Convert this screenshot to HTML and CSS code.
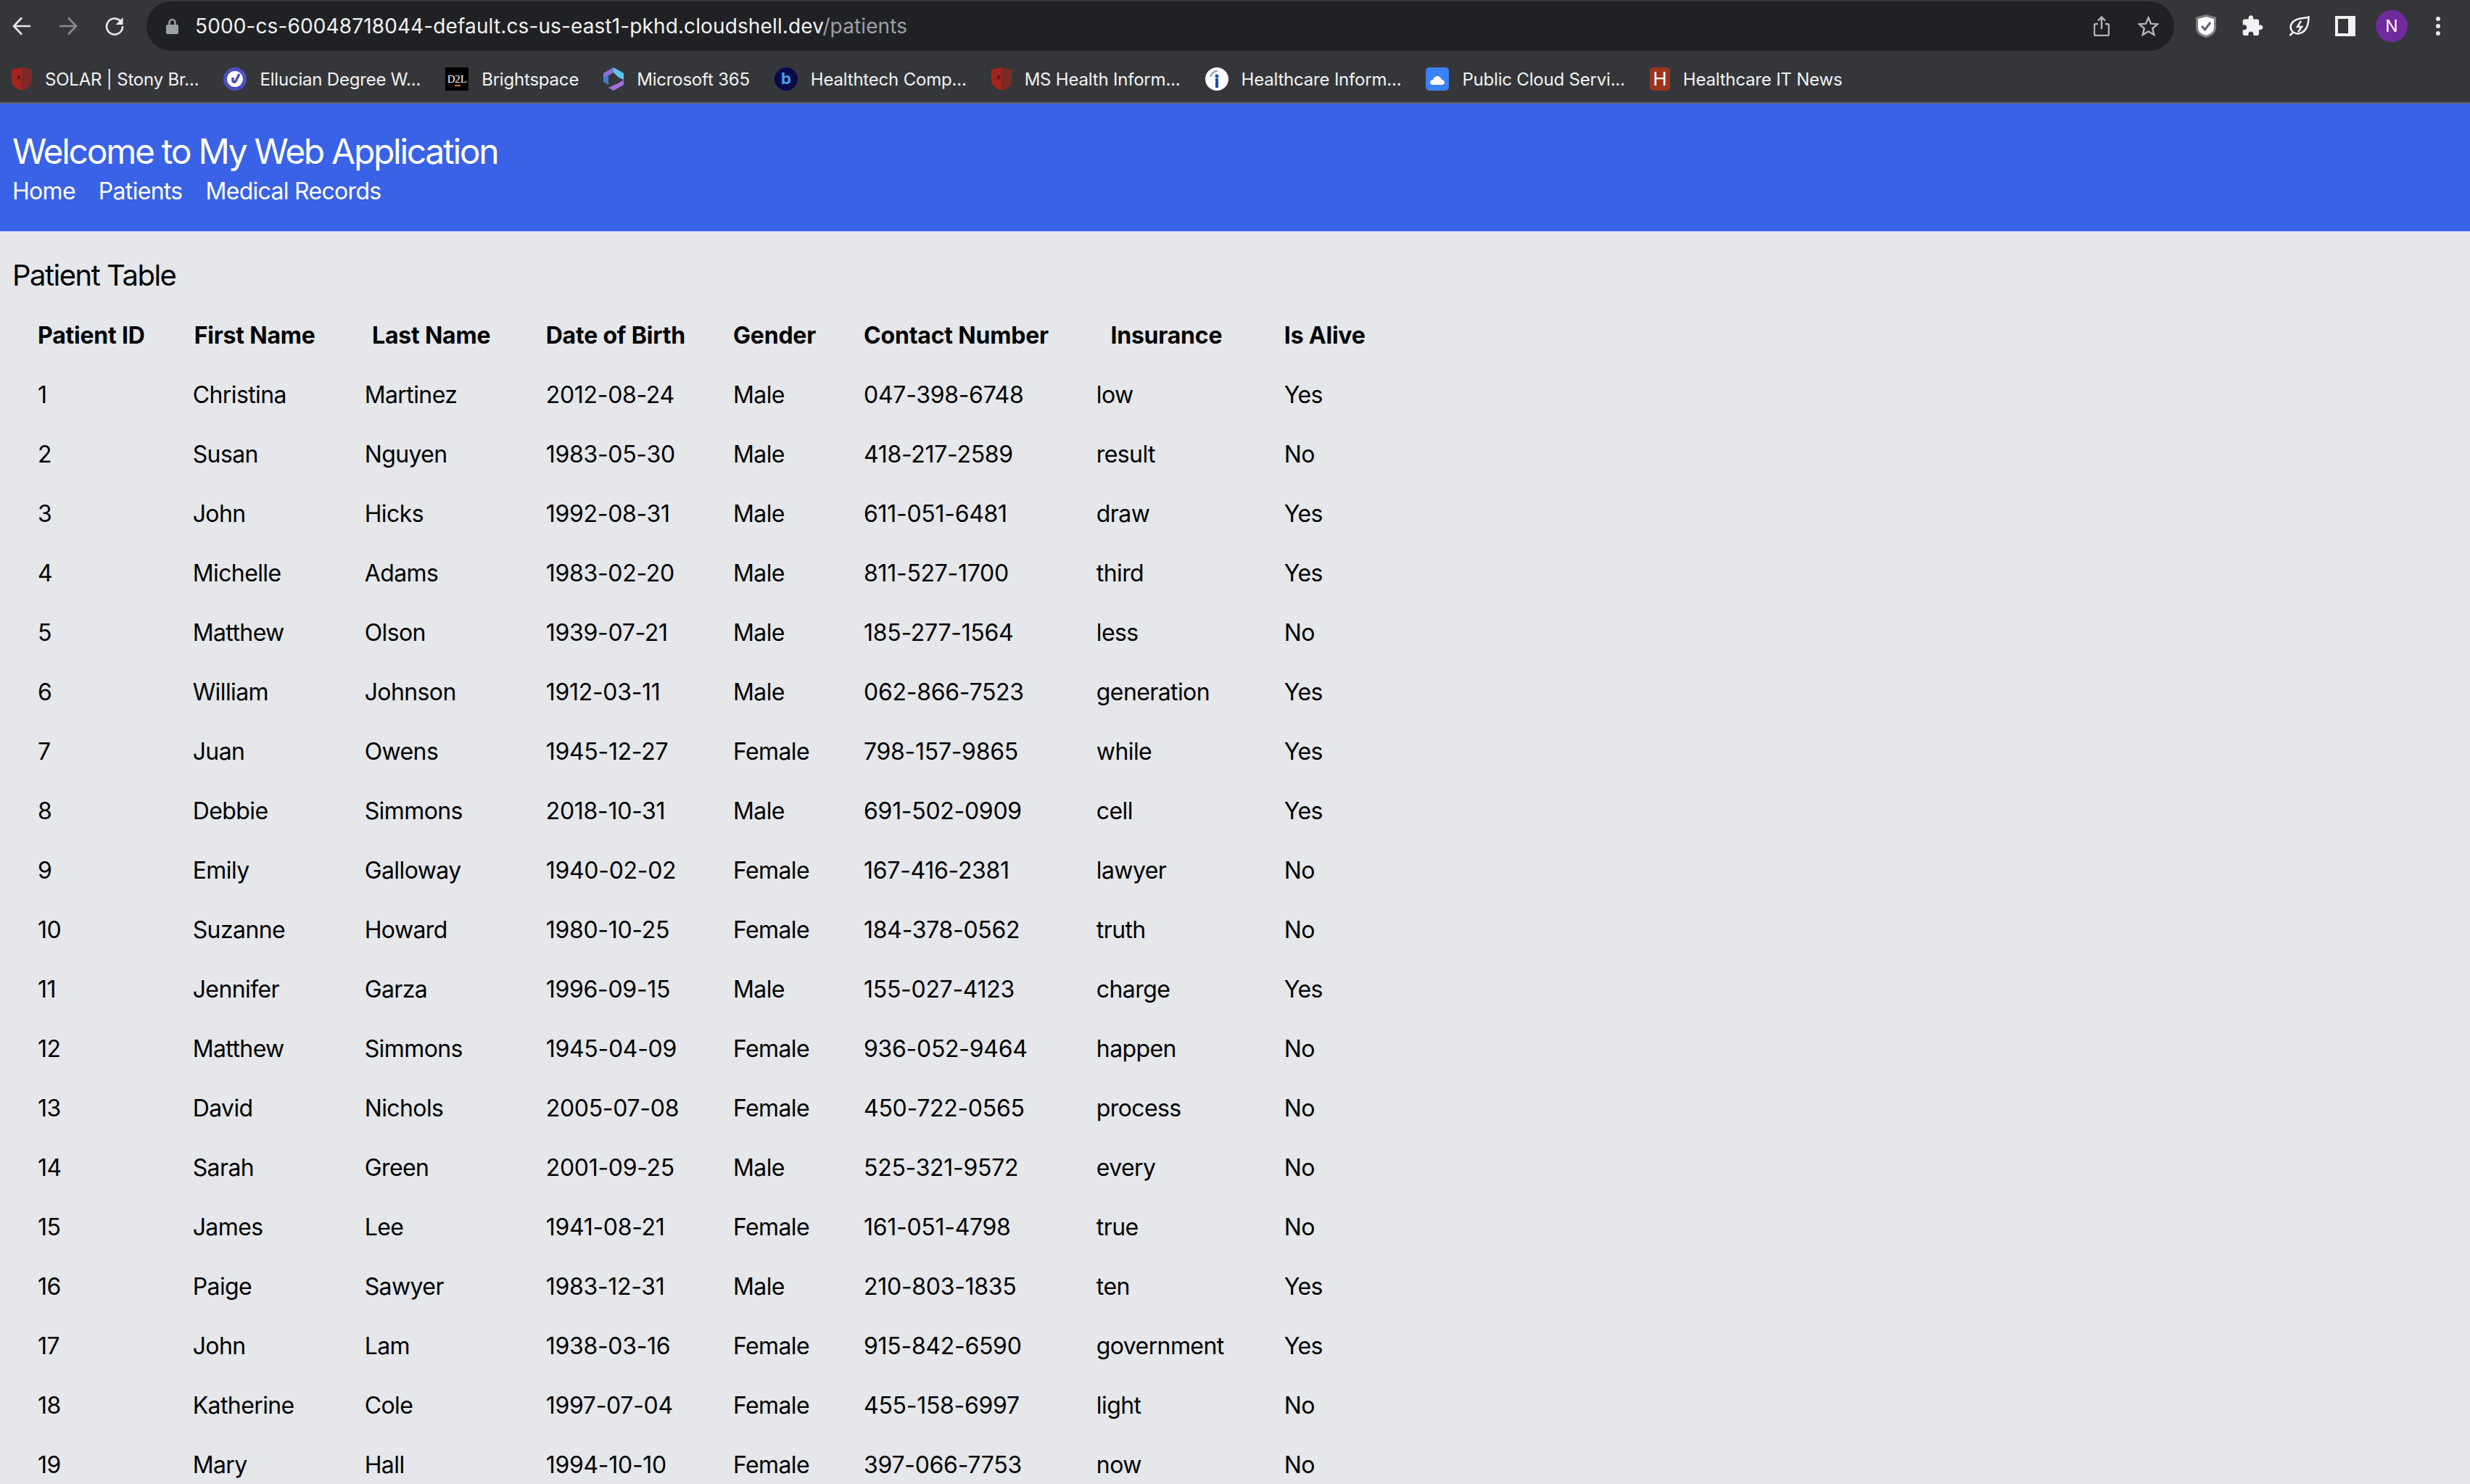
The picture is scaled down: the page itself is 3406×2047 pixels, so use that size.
FILE: index.html
```html
<!DOCTYPE html>
<html lang="en">
<head>
    <meta charset="UTF-8">
    <title>Patients</title>
    <link rel="stylesheet" href="styles.css">
</head>
<body>
    <div class="browser">
        <div class="toolbar">
            <svg class="nav-icon" viewBox="0 0 26 26"><path class="line" d="M25 13H2M13 1.500 2 13l11 11.500"/></svg>
            <svg class="nav-icon nav-off" viewBox="0 0 26 26"><path class="line" d="M1 13h23M13 1.500 24 13 13 24.500"/></svg>
            <svg class="nav-icon" viewBox="0 0 26 26"><path class="line" d="M22.500 8A11 11 0 1 0 24 13"/><path class="solid" d="M24.500 1v10h-10z"/></svg>
            <div class="address">
                <svg class="lock" viewBox="0 0 17 22"><path class="lock-loop" d="M4.500 10V6a4 4 0 0 1 8 0v4"/><rect class="solid" y="9" width="17" height="13" rx="2"/></svg>
                <span class="url">5000-cs-60048718044-default.cs-us-east1-pkhd.cloudshell.dev<span class="url-path">/patients</span></span>
                <svg class="addr-icon addr-share" viewBox="0 0 22 28"><path class="line-thin" d="M6 11H3a2 2 0 0 0-2 2v12a2 2 0 0 0 2 2h16a2 2 0 0 0 2-2V13a2 2 0 0 0-2-2h-3M11 18V2M6 6.500 11 1.500l5 5"/></svg>
                <svg class="addr-icon addr-star" viewBox="0 0 29 28"><path class="line-thin" d="m14.500 2.500 3.500 8.200 9 .7-6.800 5.900 2.100 8.700-7.800-4.700-7.800 4.700 2.100-8.700L2 11.400l9-.7z"/></svg>
            </div>
            <div class="extensions">
                <svg class="ext-shield" viewBox="0 0 28 32"><path class="shield-body" d="M14 1.500 26.500 5v13c0 6-5 10.500-12.500 12.500C6.500 28.500 1.500 24 1.500 18V5z"/><path class="shield-check" d="m8 16 4.500 5L20 11"/></svg>
                <svg class="ext-puzzle" viewBox="1.500 1 22 21.500"><path class="solid" d="M20.500 11H19V7c0-1.100-.9-2-2-2h-4V3.500C13 2.120 11.880 1 10.500 1S8 2.120 8 3.500V5H4c-1.100 0-1.990.9-1.990 2v3.800H3.500c1.490 0 2.700 1.210 2.700 2.700s-1.210 2.700-2.700 2.700H2V20c0 1.100.9 2 2 2h3.800v-1.500c0-1.490 1.210-2.700 2.700-2.700 1.490 0 2.700 1.210 2.700 2.700V22H17c1.100 0 2-.9 2-2v-4h1.500c1.380 0 2.500-1.120 2.500-2.500S21.880 11 20.500 11z"/></svg>
                <svg class="ext-leaf" viewBox="0 0 29 28"><path class="line-leaf" d="M1.500 27l5-5M27.500 1.500C24 3.500 12 2 6 8 1 13 2 19 6.500 22.500c4.500 3 10.500 2.500 15-2 5-5 6-11 6-19z"/><path class="line-bolt" d="M17 7l-5 8h6l-5 7"/></svg>
                <div class="ext-panel"><div class="ext-panel-hole"></div></div>
                <div class="avatar">N</div>
                <div class="dots"><i></i><i></i><i></i></div>
            </div>
        </div>

        <div class="bookmarks">
            <div class="bookmark">
                <svg class="fav fav-narrow" viewBox="0 0 28 32"><path fill="#a3241c" d="M0 3 14 0l14 3v15c0 7-6 11-14 14C6 29 0 25 0 18z"/><path fill="#7c2a26" d="M14 0l14 3v15c0 7-6 11-14 14z"/><rect fill="#5d1a16" x="8" y="11" width="4" height="5"/></svg>
                <span>SOLAR | Stony Br...</span>
            </div>
            <div class="bookmark">
                <svg class="fav" viewBox="0 0 32 32"><circle cx="16" cy="16" r="16" fill="#4a50c0"/><circle cx="16" cy="16" r="11" fill="#fff"/><path d="M22 9l-5 10c-1 2-4 1-4-1v-4" fill="none" stroke="#4a50c0" stroke-width="3.500"/></svg>
                <span>Ellucian Degree W...</span>
            </div>
            <div class="bookmark">
                <div class="fav fav-d2l">D<b>2</b>L</div>
                <span>Brightspace</span>
            </div>
            <div class="bookmark">
                <svg class="fav fav-narrow" viewBox="0 0 28 32"><path fill="#8a6fd6" d="M14 0 0 8v12l7 4V11l7-4z"/><path fill="#5cc3ee" d="M14 0l14 8v9l-8-4-6-6z"/><path fill="#a66fd8" d="M28 17v7l-14 8-7-4 13-6z"/><path fill="#3a7fd0" d="M0 14l7-3v13l-7-4z"/></svg>
                <span>Microsoft 365</span>
            </div>
            <div class="bookmark">
                <div class="fav fav-b">b</div>
                <span>Healthtech Comp...</span>
            </div>
            <div class="bookmark">
                <svg class="fav fav-narrow" viewBox="0 0 28 32"><path fill="#a3241c" d="M0 3 14 0l14 3v15c0 7-6 11-14 14C6 29 0 25 0 18z"/><path fill="#7c2a26" d="M14 0l14 3v15c0 7-6 11-14 14z"/><rect fill="#5d1a16" x="8" y="11" width="4" height="5"/></svg>
                <span>MS Health Inform...</span>
            </div>
            <div class="bookmark">
                <svg class="fav" viewBox="0 0 32 32"><circle cx="16" cy="16" r="16" fill="#fff"/><circle cx="16" cy="12" r="2.500" fill="#1d4f9e"/><rect x="14" y="15" width="4" height="13" fill="#1d4f9e"/><path d="M7 13a10 10 0 0 1 10-8" fill="none" stroke="#7a9cc9" stroke-width="2"/></svg>
                <span>Healthcare Inform...</span>
            </div>
            <div class="bookmark">
                <svg class="fav" viewBox="0 0 32 32"><rect width="32" height="32" rx="5" fill="#3b82f6"/><path fill="#fff" d="M6 21c0-3 2-4 4-4 1-3 3-5 6-5s5 2 6 5c2 0 4 1 4 4 0 2-2 3-4 3H10c-2 0-4-1-4-3z"/></svg>
                <span>Public Cloud Servi...</span>
            </div>
            <div class="bookmark">
                <div class="fav fav-narrow fav-h">H</div>
                <span>Healthcare IT News</span>
            </div>
        </div>
    </div>

    <header class="site-header">
        <h1>Welcome to My Web Application</h1>
        <nav class="site-nav">
            <a href="#">Home</a>
            <a href="#">Patients</a>
            <a href="#">Medical Records</a>
        </nav>
    </header>

    <main class="content">
        <h2>Patient Table</h2>
        <table class="patients">
            <thead>
                <tr>
                    <th>Patient ID</th>
                    <th class="col-first">First Name</th>
                    <th class="col-last">Last Name</th>
                    <th>Date of Birth</th>
                    <th>Gender</th>
                    <th>Contact Number</th>
                    <th class="col-insurance">Insurance</th>
                    <th>Is Alive</th>
                </tr>
            </thead>
            <tbody>
                <tr><td>1</td><td>Christina</td><td>Martinez</td><td class="num">2012-08-24</td><td>Male</td><td class="num">047-398-6748</td><td>low</td><td>Yes</td></tr>
                <tr><td>2</td><td>Susan</td><td>Nguyen</td><td class="num">1983-05-30</td><td>Male</td><td class="num">418-217-2589</td><td>result</td><td>No</td></tr>
                <tr><td>3</td><td>John</td><td>Hicks</td><td class="num">1992-08-31</td><td>Male</td><td class="num">611-051-6481</td><td>draw</td><td>Yes</td></tr>
                <tr><td>4</td><td>Michelle</td><td>Adams</td><td class="num">1983-02-20</td><td>Male</td><td class="num">811-527-1700</td><td>third</td><td>Yes</td></tr>
                <tr><td>5</td><td>Matthew</td><td>Olson</td><td class="num">1939-07-21</td><td>Male</td><td class="num">185-277-1564</td><td>less</td><td>No</td></tr>
                <tr><td>6</td><td>William</td><td>Johnson</td><td class="num">1912-03-11</td><td>Male</td><td class="num">062-866-7523</td><td>generation</td><td>Yes</td></tr>
                <tr><td>7</td><td>Juan</td><td>Owens</td><td class="num">1945-12-27</td><td>Female</td><td class="num">798-157-9865</td><td>while</td><td>Yes</td></tr>
                <tr><td>8</td><td>Debbie</td><td>Simmons</td><td class="num">2018-10-31</td><td>Male</td><td class="num">691-502-0909</td><td>cell</td><td>Yes</td></tr>
                <tr><td>9</td><td>Emily</td><td>Galloway</td><td class="num">1940-02-02</td><td>Female</td><td class="num">167-416-2381</td><td>lawyer</td><td>No</td></tr>
                <tr><td>10</td><td>Suzanne</td><td>Howard</td><td class="num">1980-10-25</td><td>Female</td><td class="num">184-378-0562</td><td>truth</td><td>No</td></tr>
                <tr><td>11</td><td>Jennifer</td><td>Garza</td><td class="num">1996-09-15</td><td>Male</td><td class="num">155-027-4123</td><td>charge</td><td>Yes</td></tr>
                <tr><td>12</td><td>Matthew</td><td>Simmons</td><td class="num">1945-04-09</td><td>Female</td><td class="num">936-052-9464</td><td>happen</td><td>No</td></tr>
                <tr><td>13</td><td>David</td><td>Nichols</td><td class="num">2005-07-08</td><td>Female</td><td class="num">450-722-0565</td><td>process</td><td>No</td></tr>
                <tr><td>14</td><td>Sarah</td><td>Green</td><td class="num">2001-09-25</td><td>Male</td><td class="num">525-321-9572</td><td>every</td><td>No</td></tr>
                <tr><td>15</td><td>James</td><td>Lee</td><td class="num">1941-08-21</td><td>Female</td><td class="num">161-051-4798</td><td>true</td><td>No</td></tr>
                <tr><td>16</td><td>Paige</td><td>Sawyer</td><td class="num">1983-12-31</td><td>Male</td><td class="num">210-803-1835</td><td>ten</td><td>Yes</td></tr>
                <tr><td>17</td><td>John</td><td>Lam</td><td class="num">1938-03-16</td><td>Female</td><td class="num">915-842-6590</td><td>government</td><td>Yes</td></tr>
                <tr><td>18</td><td>Katherine</td><td>Cole</td><td class="num">1997-07-04</td><td>Female</td><td class="num">455-158-6997</td><td>light</td><td>No</td></tr>
                <tr><td>19</td><td>Mary</td><td>Hall</td><td class="num">1994-10-10</td><td>Female</td><td class="num">397-066-7753</td><td>now</td><td>No</td></tr>
            </tbody>
        </table>
    </main>
</body>
</html>
```

FILE: styles.css
```css
:root {
    --chrome-bg: #35363a;
    --chrome-dark: #202124;
    --chrome-icon: #e8eaed;
    --header-blue: #3962e6;
    --page-bg: #e5e7eb;
}

* {
    box-sizing: border-box;
    margin: 0;
    padding: 0;
}

html, body {
    height: 2047px;
    overflow: hidden;
}

body {
    font-family: Inter, "Liberation Sans", sans-serif;
    background-color: var(--page-bg);
    color: #000;
}

/* browser chrome */
.browser {
    height: 143px;
    background-color: var(--chrome-bg);
    border-bottom: 2px solid #5f6064;
}

.toolbar {
    height: 70px;
    padding-top: 1px;
    padding-left: 17px;
    display: flex;
    align-items: center;
}

.line, .line-thin, .line-leaf, .line-bolt, .lock-loop, .shield-check {
    fill: none;
}

.solid {
    fill: currentColor;
}

.line {
    stroke: currentColor;
    stroke-width: 2.600;
}

.nav-icon {
    width: 26px;
    height: 26px;
    margin-right: 38px;
    color: var(--chrome-icon);
}

.nav-off {
    color: #8a8b8e;
}

.address {
    flex: 1;
    height: 68px;
    margin-left: -7px;
    padding-left: 27px;
    padding-right: 21px;
    border-radius: 34px;
    background-color: var(--chrome-dark);
    display: flex;
    align-items: center;
}

.lock {
    width: 17px;
    height: 22px;
    color: #9aa0a6;
}

.lock-loop {
    stroke: #9aa0a6;
    stroke-width: 2.500;
}

.url {
    margin-left: 23px;
    font-size: 28px;
    letter-spacing: 0.12px;
    color: #f1f3f4;
    white-space: nowrap;
}

.url-path {
    color: #9aa0a6;
}

.addr-icon {
    height: 28px;
}

.line-thin {
    stroke: #b4b6b9;
    stroke-width: 2.400;
}

.addr-share {
    width: 22px;
    margin-left: auto;
}

.addr-star {
    width: 29px;
    margin-left: 39px;
}

.extensions {
    width: 408px;
    padding-left: 30px;
    display: flex;
    align-items: center;
}

.ext-shield {
    width: 28px;
    height: 32px;
    margin-right: 36px;
}

.shield-body {
    fill: #fff;
    stroke: #7d7e82;
    stroke-width: 3;
}

.shield-check {
    stroke: #5f6368;
    stroke-width: 3;
}

.ext-puzzle {
    width: 29px;
    height: 29px;
    margin-right: 35px;
    color: #f1f3f4;
}

.ext-leaf {
    width: 29px;
    height: 28px;
    margin-right: 35px;
}

.line-leaf {
    stroke: #f1f3f4;
    stroke-width: 2.500;
}

.line-bolt {
    stroke: #f1f3f4;
    stroke-width: 2.500;
}

.ext-panel {
    width: 28px;
    height: 28px;
    padding: 4px 10px 4px 4px;
    margin-right: 28px;
    background-color: #f1f3f4;
}

.ext-panel-hole {
    height: 100%;
    background-color: var(--chrome-bg);
}

.avatar {
    width: 44px;
    height: 44px;
    border-radius: 50%;
    background-color: #6f2a9e;
    color: #fff;
    font-size: 23px;
    display: flex;
    align-items: center;
    justify-content: center;
}

.dots {
    margin-left: 39px;
    display: flex;
    flex-direction: column;
    gap: 4px;
}

.dots i {
    display: block;
    width: 6px;
    height: 6px;
    border-radius: 50%;
    background-color: var(--chrome-icon);
}

/* bookmarks bar */
.bookmarks {
    height: 71px;
    padding-left: 16px;
    padding-top: 23px;
    display: flex;
    gap: 34px;
    font-size: 24px;
    letter-spacing: -0.2px;
    color: #f1f3f4;
}

.bookmark {
    height: 32px;
    display: flex;
    align-items: center;
    gap: 18px;
    white-space: nowrap;
}

.fav {
    width: 32px;
    height: 32px;
    flex-shrink: 0;
}

.fav-narrow {
    width: 28px;
}

.fav-d2l {
    background-color: #000;
    color: #fff;
    font-family: "Liberation Serif", serif;
    font-size: 15px;
    line-height: 32px;
    text-align: center;
}

.fav-d2l b {
    font-weight: 400;
    border-bottom: 2px solid #d9742a;
}

.fav-b {
    border-radius: 50%;
    background-color: #050b4a;
    color: #4aa3e8;
    font-size: 22px;
    font-weight: 700;
    line-height: 30px;
    text-align: center;
}

.fav-h {
    border-radius: 5px;
    background-color: #9c3420;
    color: #fff;
    font-size: 26px;
    line-height: 32px;
    text-align: center;
}

/* page */
.site-header {
    height: 176px;
    padding: 34px 17px 0;
    background-color: var(--header-blue);
    color: #fff;
}

.site-header h1 {
    font-size: 48px;
    line-height: 64px;
    font-weight: 400;
    letter-spacing: -2.300px;
}

.site-nav {
    display: flex;
    gap: 32px;
    margin-top: -1px;
    font-size: 32px;
    line-height: 48px;
    letter-spacing: -0.700px;
}

.site-nav a {
    color: #fff;
    text-decoration: none;
}

.content {
    padding: 33px 16px 0 17px;
}

.content h2 {
    font-size: 40px;
    line-height: 56px;
    font-weight: 400;
    letter-spacing: -1.500px;
    margin-bottom: 13px;
}

.patients {
    margin-left: 1px;
    font-size: 32px;
    line-height: 48px;
}

.patients th, .patients td {
    padding: 16px 32px;
}

.patients th {
    font-weight: 700;
    letter-spacing: -0.200px;
    text-align: center;
}

.patients td {
    text-align: left;
    letter-spacing: -0.600px;
}

.patients td.num {
    letter-spacing: -0.300px;
}

.patients .col-first {
    width: 235px;
}

.patients .col-last {
    width: 248px;
}

.patients .col-insurance {
    width: 257px;
}
```
